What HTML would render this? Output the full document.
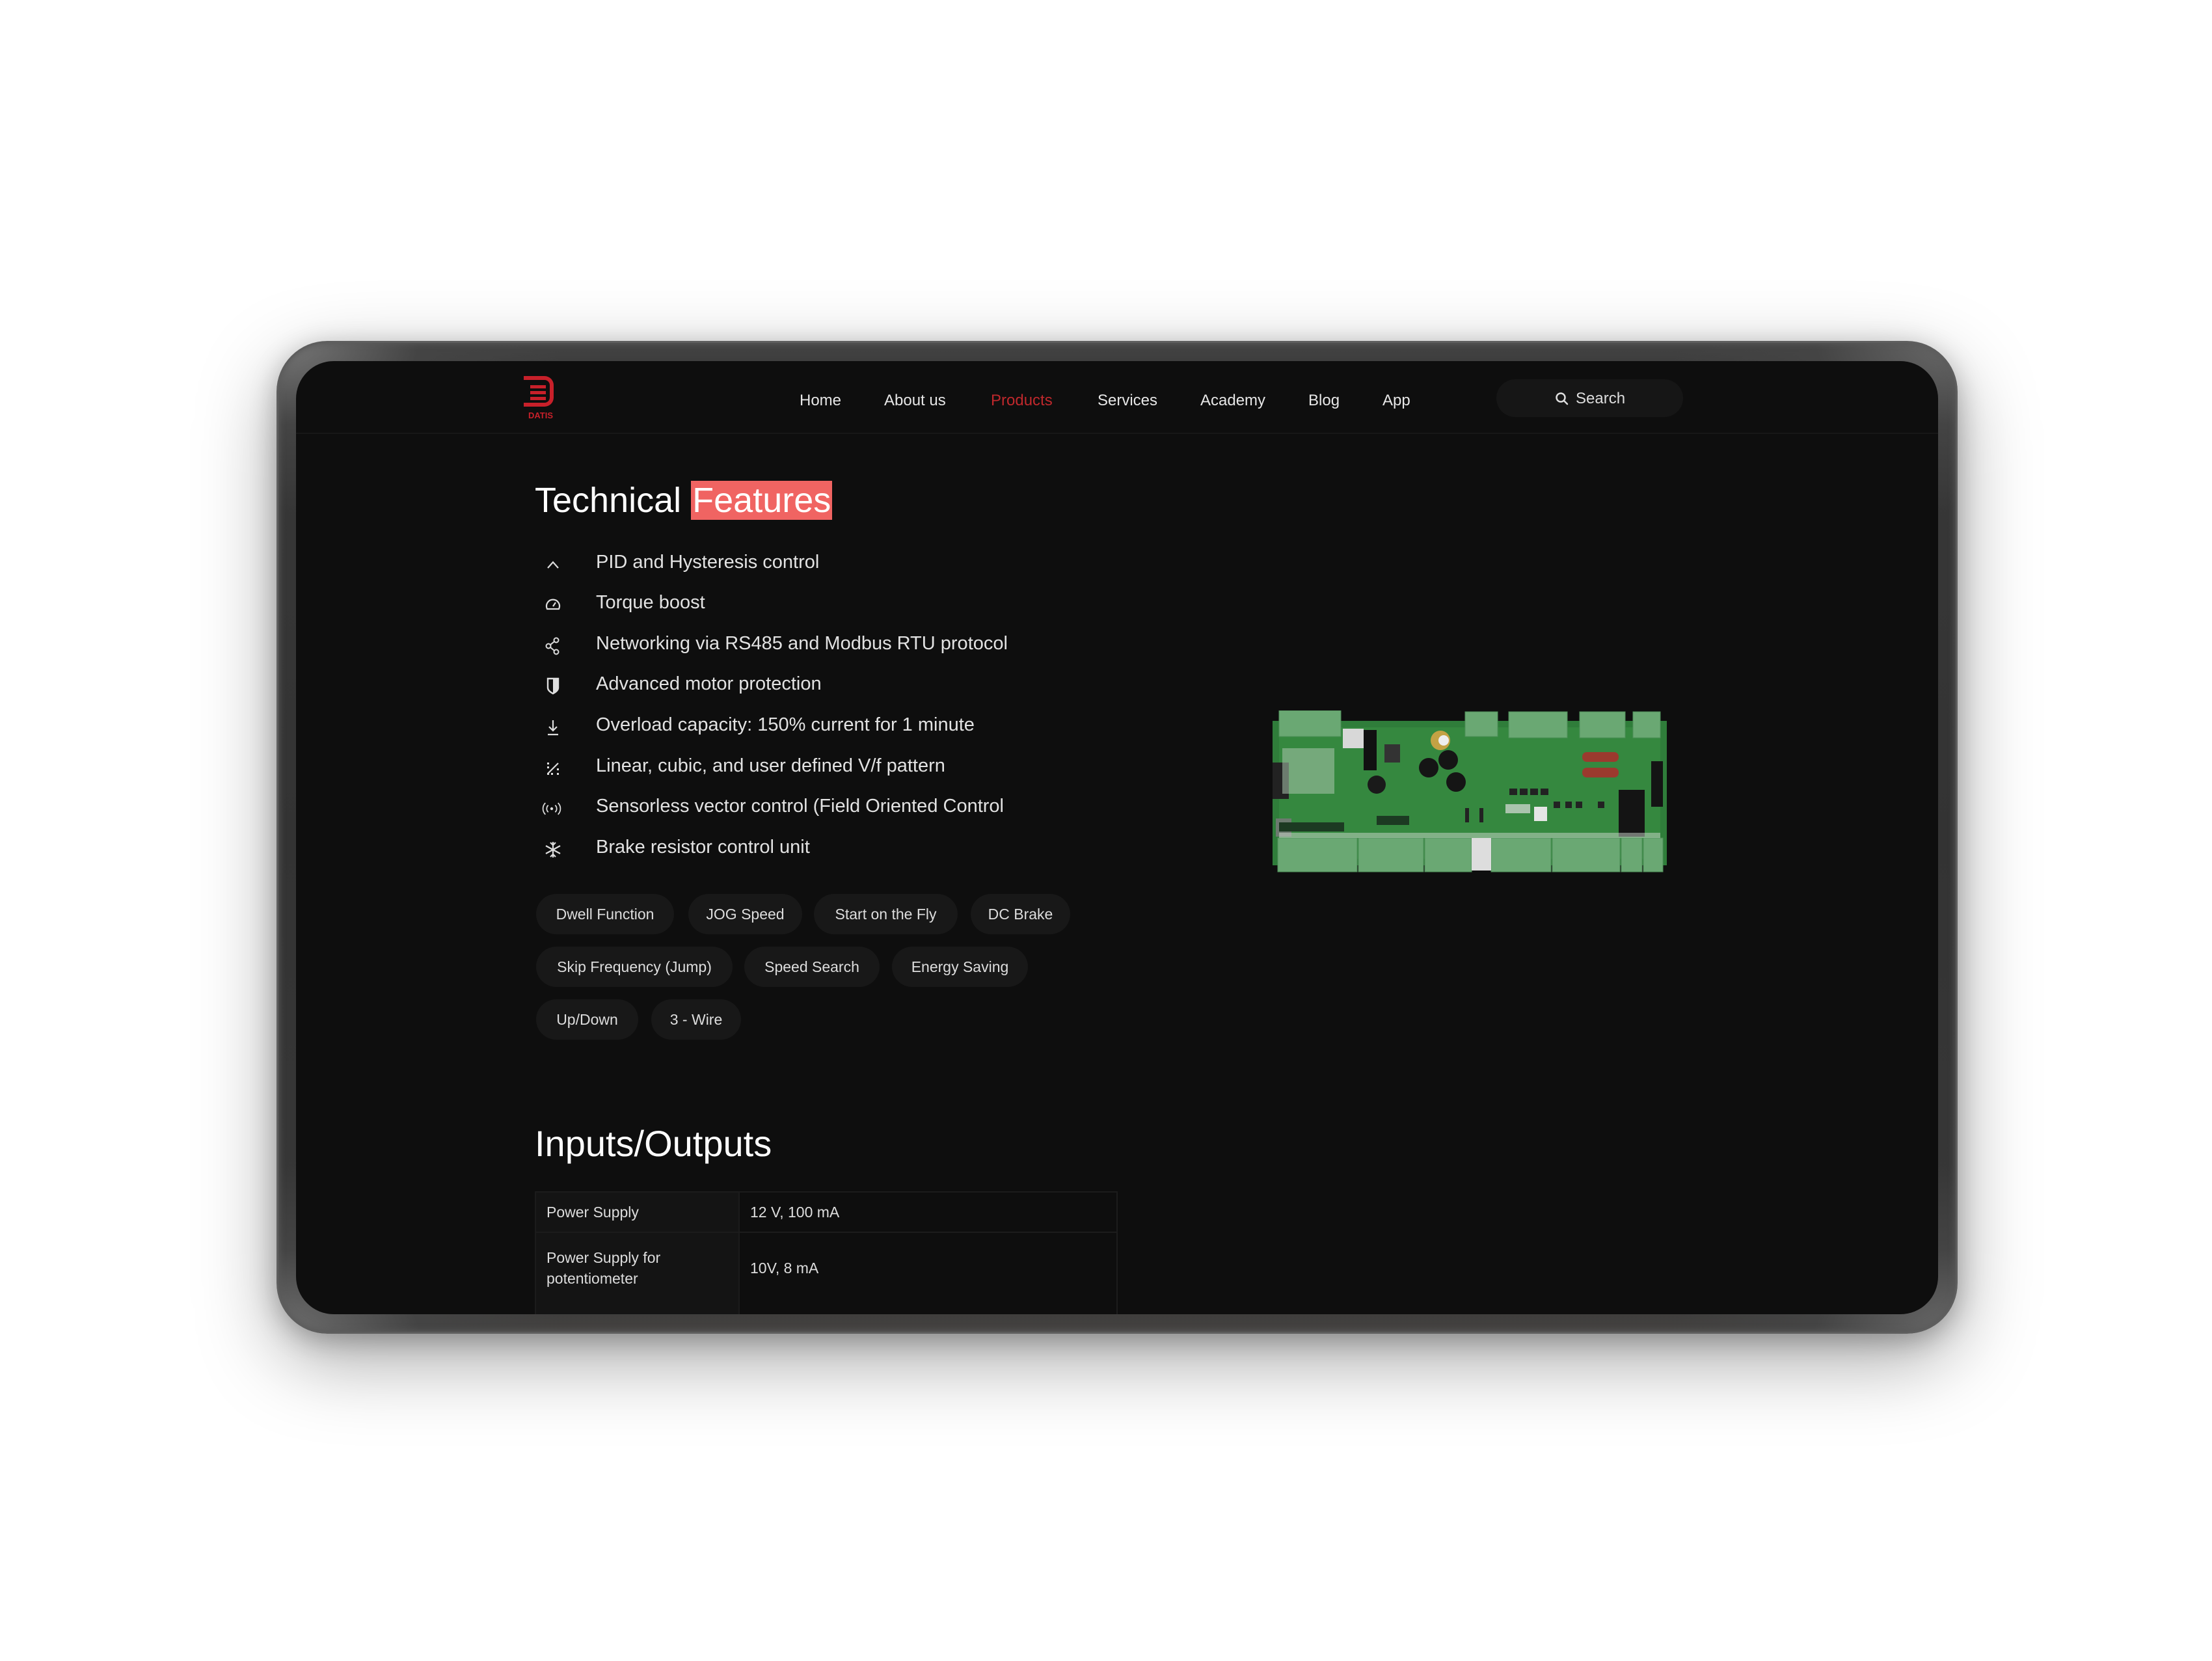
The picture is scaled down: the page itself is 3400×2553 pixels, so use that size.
<!DOCTYPE html>
<html><head><meta charset="utf-8">
<style>
*{margin:0;padding:0;box-sizing:border-box}
html,body{width:3400px;height:2553px;background:#fff;overflow:hidden;font-family:"Liberation Sans",sans-serif}
.dev{position:absolute;left:425px;top:524px;width:2584px;height:1526px;border-radius:78px;
background:radial-gradient(ellipse at 0 0,#7a7a7a 0,#444 6%,transparent 12%),radial-gradient(ellipse at 0 100%,#707070 0,#444 6%,transparent 12%),radial-gradient(ellipse at 100% 0,#6a6a6a 0,#444 6%,transparent 12%),radial-gradient(ellipse at 100% 100%,#6a6a6a 0,#444 6%,transparent 12%),linear-gradient(180deg,#444 0%,#383838 4%,#333 50%,#383838 96%,#454341 100%);
box-shadow:0 40px 120px rgba(0,0,0,.35),0 10px 40px rgba(0,0,0,.25),inset 0 0 0 3px #5e5e5e,inset 0 0 10px 4px #5a5a5a;}
.scr{position:absolute;left:455px;top:555px;width:2524px;height:1465px;border-radius:58px;background:#0e0e0e;overflow:hidden}
.a{position:absolute;white-space:nowrap}
.nav{color:#e6e6e6;font-size:24px;top:602px}
.hl{border-bottom:2px solid #171717;position:absolute;left:0;top:110px;width:100%}
.li{position:absolute;color:#e2e2e2;font-size:29px;white-space:nowrap}
.ic{position:absolute;width:30px;height:30px}
.chip{position:absolute;height:62px;border-radius:31px;background:#181818;color:#ddd;font-size:23px;line-height:62px;text-align:center}
td{border:2px solid #1c1c1c;color:#ddd;font-size:23px;padding:0 16px;vertical-align:middle}
</style></head><body>
<div class="dev"></div>
<div class="scr">
  <div class="hl"></div>
  <div style="position:absolute;left:350px;top:23px;width:46px;height:47px">
    <div style="position:absolute;left:0;top:0;width:46px;height:47px;border:6px solid #c8202a;border-left:none;border-radius:0 14px 14px 0"></div>
    <div style="position:absolute;left:0;top:0;width:20px;height:6px;background:#c8202a"></div>
    <div style="position:absolute;left:10px;top:14px;width:24px;height:5px;background:#c8202a"></div>
    <div style="position:absolute;left:10px;top:23px;width:24px;height:5px;background:#c8202a"></div>
    <div style="position:absolute;left:10px;top:32px;width:24px;height:5px;background:#c8202a"></div>
  </div>
  <div class="a" style="left:357px;top:76px;color:#c8202a;font-size:13px;font-weight:bold">DATIS</div>
  <table style="position:absolute;left:367px;top:1276px;width:896px;border-collapse:collapse">
  <tr style="height:62px"><td style="width:313px;background:#141414">Power Supply</td><td>12 V, 100 mA</td></tr>
  <tr style="height:130px"><td style="background:#141414;line-height:32px;padding-bottom:20px">Power Supply for<br>potentiometer</td><td style="padding-bottom:20px">10V, 8 mA</td></tr>
  </table>
</div>
<div class="a nav" style="left:1229px">Home</div>
<div class="a nav" style="left:1359px">About us</div>
<div class="a nav" style="left:1523px;color:#c0282c">Products</div>
<div class="a nav" style="left:1687px">Services</div>
<div class="a nav" style="left:1845px">Academy</div>
<div class="a nav" style="left:2011px">Blog</div>
<div class="a nav" style="left:2125px">App</div>
<div style="position:absolute;left:2300px;top:583px;width:287px;height:58px;border-radius:29px;background:#161616"></div>
<svg class="a" style="left:2390px;top:602px" width="22" height="22" viewBox="0 0 22 22"><circle cx="9" cy="9" r="6.5" fill="none" stroke="#ddd" stroke-width="2.5"/><path d="M14 14l5 5" stroke="#ddd" stroke-width="2.5" stroke-linecap="round"/></svg>
<div class="a" style="left:2422px;top:599px;color:#ddd;font-size:24px">Search</div>

<div class="a" style="left:822px;top:738px;color:#fff;font-size:54px;line-height:62px">Technical <span style="background:#f06462;padding:0 2px">Features</span></div>

<svg class="ic" style="left:835px;top:853px" width="30" height="30" viewBox="0 0 30 30"><path d="M7 20l8-9 8 9" fill="none" stroke="#ddd" stroke-width="2.2"/></svg>
<div class="li" style="left:916px;top:848px">PID and Hysteresis control</div>
<svg class="ic" style="left:835px;top:914px" width="30" height="30" viewBox="0 0 30 30"><path d="M6 22a10 10 0 1 1 18 0z" fill="none" stroke="#ddd" stroke-width="2.2"/><path d="M15 18l4-6" stroke="#ddd" stroke-width="2.2"/></svg>
<div class="li" style="left:916px;top:910px">Torque boost</div>
<svg class="ic" style="left:835px;top:978px" width="30" height="30" viewBox="0 0 30 30"><circle cx="20" cy="6" r="3.5" fill="none" stroke="#ddd" stroke-width="2"/><circle cx="8" cy="15" r="3.5" fill="none" stroke="#ddd" stroke-width="2"/><circle cx="20" cy="24" r="3.5" fill="none" stroke="#ddd" stroke-width="2"/><path d="M11 13l6-5M11 17l6 5" stroke="#ddd" stroke-width="2"/></svg>
<div class="li" style="left:916px;top:973px">Networking via RS485 and Modbus RTU protocol</div>
<svg class="ic" style="left:835px;top:1039px" width="30" height="30" viewBox="0 0 30 30"><path d="M7 4h16v14c0 4-4 7-8 9-4-2-8-5-8-9z" fill="none" stroke="#ddd" stroke-width="2.4"/><path d="M15 4v22c3-2 8-4 8-8V4z" fill="#ddd"/></svg>
<div class="li" style="left:916px;top:1035px">Advanced motor protection</div>
<svg class="ic" style="left:835px;top:1103px" width="30" height="30" viewBox="0 0 30 30"><path d="M15 4v16M9 14l6 6 6-6M7 26h16" fill="none" stroke="#ddd" stroke-width="2.2"/></svg>
<div class="li" style="left:916px;top:1098px">Overload capacity: 150% current for 1 minute</div>
<svg class="ic" style="left:835px;top:1166px" width="30" height="30" viewBox="0 0 30 30"><path d="M7 23L23 7" stroke="#ddd" stroke-width="2.2"/><g fill="#ddd"><rect x="6" y="6" width="3" height="3"/><rect x="6" y="12" width="3" height="3"/><rect x="6" y="22" width="3" height="3"/><rect x="12" y="22" width="3" height="3"/><rect x="21" y="22" width="3" height="3"/><rect x="21" y="15" width="3" height="3"/></g></svg>
<div class="li" style="left:916px;top:1161px">Linear, cubic, and user defined V/f pattern</div>
<svg class="ic" style="left:833px;top:1228px" width="34" height="30" viewBox="0 0 34 30"><circle cx="17" cy="15" r="2.5" fill="#ddd"/><path d="M11 9a8 8 0 0 0 0 12M23 9a8 8 0 0 1 0 12M6 5a14 14 0 0 0 0 20M28 5a14 14 0 0 1 0 20" fill="none" stroke="#ddd" stroke-width="2"/></svg>
<div class="li" style="left:916px;top:1223px">Sensorless vector control (Field Oriented Control</div>
<svg class="ic" style="left:835px;top:1291px" width="30" height="30" viewBox="0 0 30 30"><path d="M15 3v24M4 9l22 12M4 21l22-12M11 4l4 4 4-4M11 26l4-4 4 4" fill="none" stroke="#ddd" stroke-width="2.2"/></svg>
<div class="li" style="left:916px;top:1286px">Brake resistor control unit</div>

<div class="chip" style="left:824px;top:1374px;width:212px">Dwell Function</div>
<div class="chip" style="left:1058px;top:1374px;width:175px">JOG Speed</div>
<div class="chip" style="left:1251px;top:1374px;width:221px">Start on the Fly</div>
<div class="chip" style="left:1492px;top:1374px;width:153px">DC Brake</div>
<div class="chip" style="left:824px;top:1455px;width:302px">Skip Frequency (Jump)</div>
<div class="chip" style="left:1144px;top:1455px;width:208px">Speed Search</div>
<div class="chip" style="left:1371px;top:1455px;width:209px">Energy Saving</div>
<div class="chip" style="left:824px;top:1536px;width:157px">Up/Down</div>
<div class="chip" style="left:1001px;top:1536px;width:138px">3 - Wire</div>

<div class="a" style="left:822px;top:1726px;color:#fff;font-size:56px;line-height:64px">Inputs/Outputs</div>

<svg style="position:absolute;left:1956px;top:1092px" width="620" height="250" viewBox="0 0 620 250">
<rect x="0" y="16" width="606" height="222" fill="#2f7d3a"/>
<rect x="10" y="26" width="586" height="202" fill="#35883f"/>
<g fill="#6aa873" stroke="#4f8f58" stroke-width="1">
<rect x="10" y="0" width="95" height="40"/><rect x="296" y="2" width="50" height="38"/><rect x="363" y="2" width="90" height="40"/><rect x="472" y="2" width="70" height="40"/><rect x="554" y="2" width="42" height="40"/>
<rect x="8" y="196" width="122" height="52"/><rect x="132" y="196" width="100" height="52"/><rect x="234" y="196" width="72" height="52"/><rect x="336" y="196" width="92" height="52"/><rect x="430" y="196" width="104" height="52"/><rect x="536" y="196" width="32" height="52"/><rect x="570" y="196" width="30" height="52"/>
</g>
<rect x="108" y="28" width="32" height="30" fill="#d8d8d8"/>
<rect x="306" y="196" width="30" height="50" fill="#ddd"/>
<rect x="140" y="30" width="20" height="62" fill="#111"/>
<rect x="172" y="52" width="24" height="28" fill="#333"/>
<circle cx="160" cy="114" r="14" fill="#1a1a1a"/>
<circle cx="258" cy="46" r="15" fill="#c4a244"/><circle cx="263" cy="46" r="8" fill="#eee"/>
<circle cx="240" cy="88" r="15" fill="#151515"/><circle cx="270" cy="76" r="15" fill="#151515"/><circle cx="282" cy="110" r="15" fill="#151515"/>
<rect x="0" y="80" width="25" height="56" fill="#222"/>
<rect x="5" y="166" width="24" height="28" fill="#6c7a6f"/>
<rect x="10" y="172" width="100" height="14" fill="#1c3a22"/><rect x="160" y="162" width="50" height="14" fill="#1c3a22"/>
<rect x="15" y="58" width="80" height="70" fill="#a9c4ad" opacity=".55"/>
<rect x="476" y="64" width="56" height="15" rx="7" fill="#9b3a2e"/><rect x="476" y="88" width="56" height="15" rx="7" fill="#9b3a2e"/>
<rect x="532" y="122" width="40" height="72" fill="#141414"/><rect x="582" y="78" width="18" height="70" fill="#141414"/>
<rect x="402" y="148" width="20" height="22" fill="#e5e5e5"/>
<rect x="358" y="144" width="38" height="14" fill="#aac4ad"/>
<g fill="#222"><rect x="364" y="120" width="12" height="10"/><rect x="380" y="120" width="12" height="10"/><rect x="396" y="120" width="12" height="10"/><rect x="412" y="120" width="12" height="10"/><rect x="432" y="140" width="10" height="10"/><rect x="450" y="140" width="10" height="10"/><rect x="466" y="140" width="10" height="10"/><rect x="500" y="140" width="10" height="10"/><rect x="296" y="150" width="6" height="22"/><rect x="318" y="150" width="6" height="22"/></g>
<rect x="10" y="188" width="586" height="8" fill="#cfd9cf" opacity=".5"/>
</svg>
</body></html>
